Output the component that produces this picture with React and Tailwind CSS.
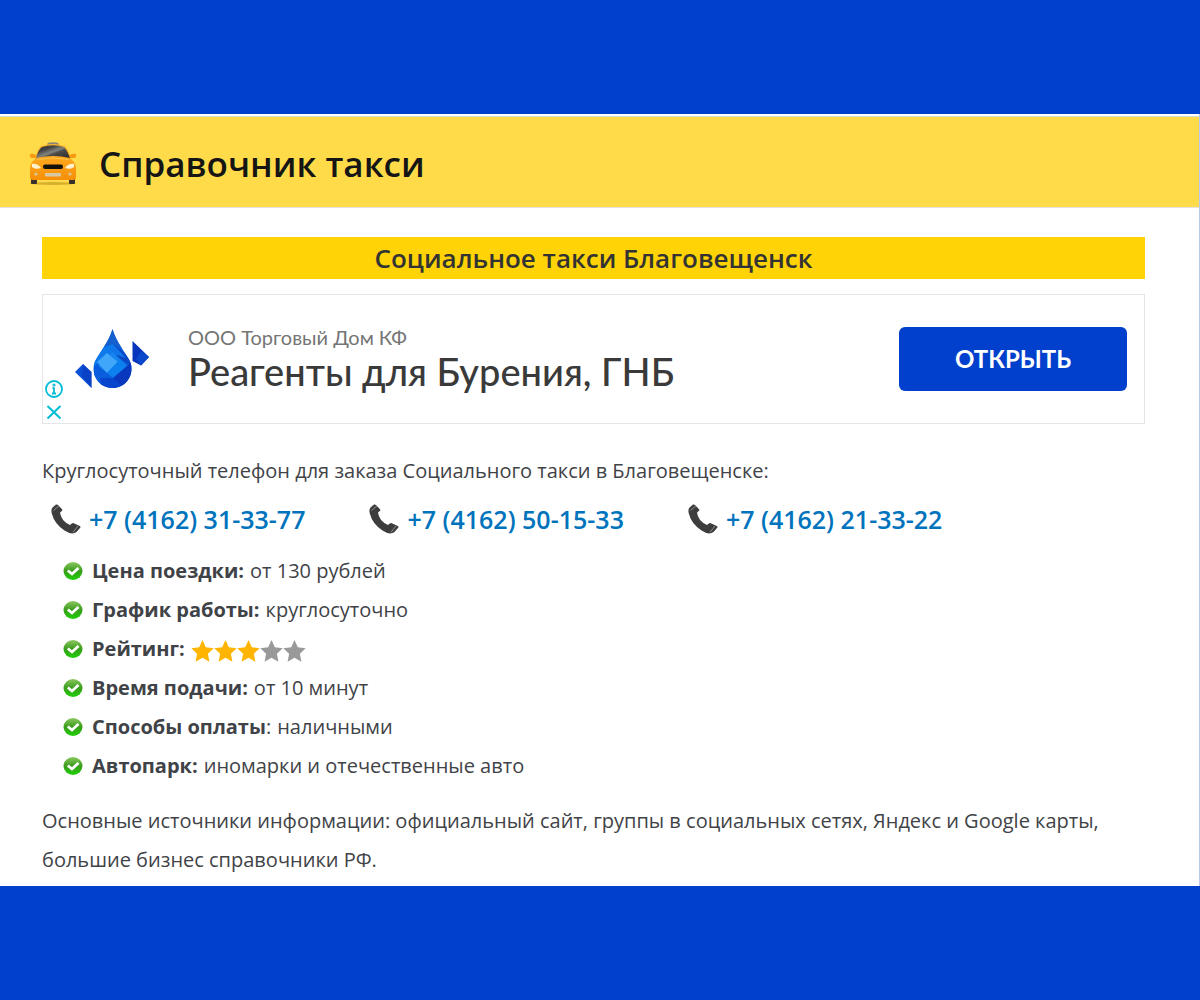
import React from "react";

const phones = ["+7 (4162) 31-33-77", "+7 (4162) 50-15-33", "+7 (4162) 21-33-22"];

const facts = [
  { label: "Цена поездки:", value: "от 130 рублей" },
  { label: "График работы:", value: "круглосуточно" },
  { label: "Рейтинг:", rating: 3 },
  { label: "Время подачи:", value: "от 10 минут" },
  { label: "Способы оплаты", tail: ":", value: "наличными" },
  { label: "Автопарк:", value: "иномарки и отечественные авто" },
];

function TaxiIcon() {
  return (
    <svg viewBox="0 0 48 44" className="h-11 w-12 shrink-0" aria-hidden="true">
      <defs>
        <linearGradient id="body" x1="0" y1="0" x2="0" y2="1">
          <stop offset="0" stopColor="#ffb62a" />
          <stop offset="1" stopColor="#f78f08" />
        </linearGradient>
        <linearGradient id="glass" x1="0" y1="0" x2="1" y2="1">
          <stop offset="0" stopColor="#2c2c2c" />
          <stop offset="0.3" stopColor="#444" />
          <stop offset="0.5" stopColor="#84847e" />
          <stop offset="0.6" stopColor="#4c4c4a" />
          <stop offset="1" stopColor="#2c2c2c" />
        </linearGradient>
      </defs>
      <ellipse cx="24" cy="41.500" rx="23" ry="1.500" fill="#c79b22" opacity=".7" />
      <rect x="2" y="34" width="6" height="8" rx="1" fill="#38302a" />
      <rect x="40" y="34" width="6" height="8" rx="1" fill="#38302a" />
      <path d="M17.500 3.500 19 .8Q24-.3 29 .8L30.500 3.500Z" fill="#8b8674" />
      <path d="M1 12q3-1 6 1l1 3H3q-3-1-2-4ZM47 12q-3-1-6 1l-1 3h5q3-1 2-4Z" fill="#f79a12" />
      <path d="M12 4Q24 0 36 4q4 4 6 13 5 4 5 10v8q0 3-3 3H4q-3 0-3-3v-8q0-6 5-10 2-9 6-13Z" fill="url(#body)" />
      <path d="M13 5Q24 1.500 35 5q3 3 6 11Q24 12 7 16q2-8 6-11Z" fill="url(#glass)" />
      <path d="M8 17.500q16-3 32 0" fill="none" stroke="#ffc04a" strokeWidth="1" />
      <rect x="14" y="22.500" width="20" height="4.500" rx="2" fill="#15120c" />
      <path d="M3 22q5-1 9 4-6 2-9-1ZM45 22q-5-1-9 4 6 2 9-1Z" fill="#fff2cf" />
      <rect x="16" y="31" width="16" height="3.500" rx="1" fill="#d8c8a4" />
      <circle cx="7" cy="32" r="1.600" fill="#d8c69a" />
      <circle cx="41" cy="32" r="1.600" fill="#d8c69a" />
    </svg>
  );
}

function DropLogo() {
  return (
    <svg viewBox="0 0 76 62" className="h-[62px] w-[76px] shrink-0" aria-hidden="true">
      <defs>
        <clipPath id="drop">
          <path d="M38.500 1C42 13 50 23 55 31.500a19 19 0 1 1-33 0C27 23 35 13 38.500 1Z" />
        </clipPath>
      </defs>
      <g clipPath="url(#drop)">
        <rect width="76" height="62" fill="#0a5fdc" />
        <path d="M39 0 28 20l11-4 10 6Z" fill="#1560cf" />
        <path d="M28 20 39 16v10L20 38V26Z" fill="#0d79ea" />
        <path d="M39 16 60 32v8L39 26Z" fill="#0a48c4" />
        <path d="M39 16 52 30 39 26Z" fill="#0f75e8" />
        <path d="M39 24 53 38 39 50 24 38Z" fill="#1583f0" />
        <path d="M33 25 44 34 33 45 23 34Z" fill="#3fa6fa" />
        <path d="M46 31 53 38 39 50 33 45Z" fill="#0d80f0" />
        <path d="M20 38h4l15 12v11H20Z" fill="#0a5ddd" />
        <path d="M53 38 60 32v28H39V50Z" fill="#0838bd" />
        <path d="M26 50 39 50l12 11H28Z" fill="#0847cd" />
      </g>
      <path d="M58.500 13 75 29 67 37.500 58.500 33Z" fill="#0735bb" />
      <path d="M67 23 75 29 67 37.500 62 31Z" fill="#0b49cc" />
      <path d="M1 44 9 36 17.500 44V60Z" fill="#0a50d6" />
      <path d="M9 36 17.500 44V60L8 48Z" fill="#0838bd" opacity=".6" />
    </svg>
  );
}

function PhoneIcon() {
  return (
    <svg viewBox="0 0 30 30" className="size-[30px] shrink-0" aria-hidden="true">
      <path d="M1.500 3.500 5 .6Q6 0 7 1l4 4.200q.8 1-.2 1.800L9 8.500q1 8.500 10 12.500l1.800-1.500q1-.7 2-.2l6 2.700q1.200.7.400 1.800L25.500 28Q21 31.500 13.500 26.500 3.500 20 .8 9.500-.2 5.500 1.500 3.500Z" fill="#3d3d3d" />
      <path d="M2.500 6.500 8 1.800M22 28.200 27 22" stroke="#8f8f8f" strokeWidth="1" />
    </svg>
  );
}

function CheckIcon() {
  return (
    <svg viewBox="0 0 20 20" className="size-5 shrink-0" aria-hidden="true">
      <defs>
        <linearGradient id="green" x1="0" y1="0" x2="0" y2="1">
          <stop offset="0" stopColor="#8cc860" />
          <stop offset="0.5" stopColor="#3a9c1c" />
          <stop offset="1" stopColor="#1fd006" />
        </linearGradient>
      </defs>
      <ellipse cx="10" cy="10" rx="9.500" ry="9" fill="url(#green)" />
      <path d="M4.800 9.500 9 13 15.500 7" fill="none" stroke="#fff" strokeWidth="2.800" />
    </svg>
  );
}

function Rating({ value }) {
  return (
    <span role="img" aria-label={`${value} из 5`} className="flex pt-1">
      {[1, 2, 3, 4, 5].map((n) => (
        <svg key={n} viewBox="0 0 23 22" className="h-[22px] w-[23px]">
          <path
            d="M11.500 0 14.800 7.300 22.700 8.300 16.900 13.700 18.400 21.700 11.500 17.800 4.600 21.700 6.100 13.700.3 8.300 8.200 7.300Z"
            fill={n <= value ? "#ffb400" : "#999"}
          />
        </svg>
      ))}
    </span>
  );
}

export default function App() {
  return (
    <div className="flex min-h-screen flex-col justify-center bg-[#0040cc] font-['Open_Sans',sans-serif] text-[#3f4347]">
      <div className="border-r border-[#b8c8ee] bg-white pt-0.5">
        <header className="flex items-center gap-[22px] border-y border-t-[#d9d9d9] border-b-[#e6e0e0] bg-[#ffdb49] px-[29px] pt-[25px] pb-[21px]">
          <TaxiIcon />
          <h1 className="text-[35px] leading-[44px] font-semibold text-[#151515]">Справочник такси</h1>
        </header>

        <main className="pt-[29px] pr-[54px] pb-[7px] pl-[42px]">
          <h2 className="bg-[#ffd305] text-center text-[26px] leading-[42px] font-semibold text-[#333]">
            Социальное такси Благовещенск
          </h2>

          <section className="mt-[15px] flex items-center border border-[#e4e6e8] py-8 pr-[17px]">
            <div className="-my-8 flex w-[31px] flex-col items-start gap-[5px] self-end pb-[3px] pl-px text-[#00bcd4]">
              <button type="button" aria-label="Информация">
                <svg viewBox="0 0 20 20" className="size-5" fill="none" stroke="currentColor" strokeWidth="1.800">
                  <circle cx="10" cy="10" r="8" />
                  <path d="M10 8.500v6M8.500 9h1.500M8 14.500h4" />
                  <circle cx="10" cy="6" r=".6" />
                </svg>
              </button>
              <button type="button" aria-label="Закрыть">
                <svg viewBox="0 0 20 16" className="h-4 w-5" fill="none" stroke="currentColor" strokeWidth="2">
                  <path d="M3.500 2 16.500 14.500M16.500 2 3.500 14.500" />
                </svg>
              </button>
            </div>
            <DropLogo />
            <div className="-my-1 ml-[38px] grow font-['Lato',sans-serif]">
              <p className="text-xl leading-6 text-[#757575]">ООО Торговый Дом КФ</p>
              <p className="text-[38px] leading-11 font-medium text-[#3a3a3a]">Реагенты для Бурения, ГНБ</p>
            </div>
            <button type="button" className="w-[228px] rounded-md bg-[#0040cc] font-['Lato',sans-serif] text-2xl leading-[64px] font-bold text-white">
              ОТКРЫТЬ
            </button>
          </section>

          <p className="mt-[27px] text-xl leading-[39px]">
            Круглосуточный телефон для заказа Социального такси в Благовещенске:
          </p>

          <div className="mt-[7px] flex gap-16 pl-[9px]">
            {phones.map((phone) => (
              <a key={phone} href={`tel:${phone.replace(/[^+\d]/g, "")}`} className="flex items-center gap-2 text-[25px] leading-[44px] font-semibold text-[#0073bd]">
                <PhoneIcon />
                {phone}
              </a>
            ))}
          </div>

          <ul className="mt-2.5 pl-[21px] text-xl leading-[39px]">
            {facts.map(({ label, tail, value, rating }) => (
              <li key={label} className="flex items-center">
                <CheckIcon />
                <span className="mr-1.5 ml-[9px]">
                  <b>{label}</b>
                  {tail}
                </span>
                {rating ? <Rating value={rating} /> : <span>{value}</span>}
              </li>
            ))}
          </ul>

          <p className="mt-4 text-xl leading-[39px]">
            Основные источники информации: официальный сайт, группы в социальных сетях, Яндекс и Google карты,
            большие бизнес справочники РФ.
          </p>
        </main>
      </div>
    </div>
  );
}
